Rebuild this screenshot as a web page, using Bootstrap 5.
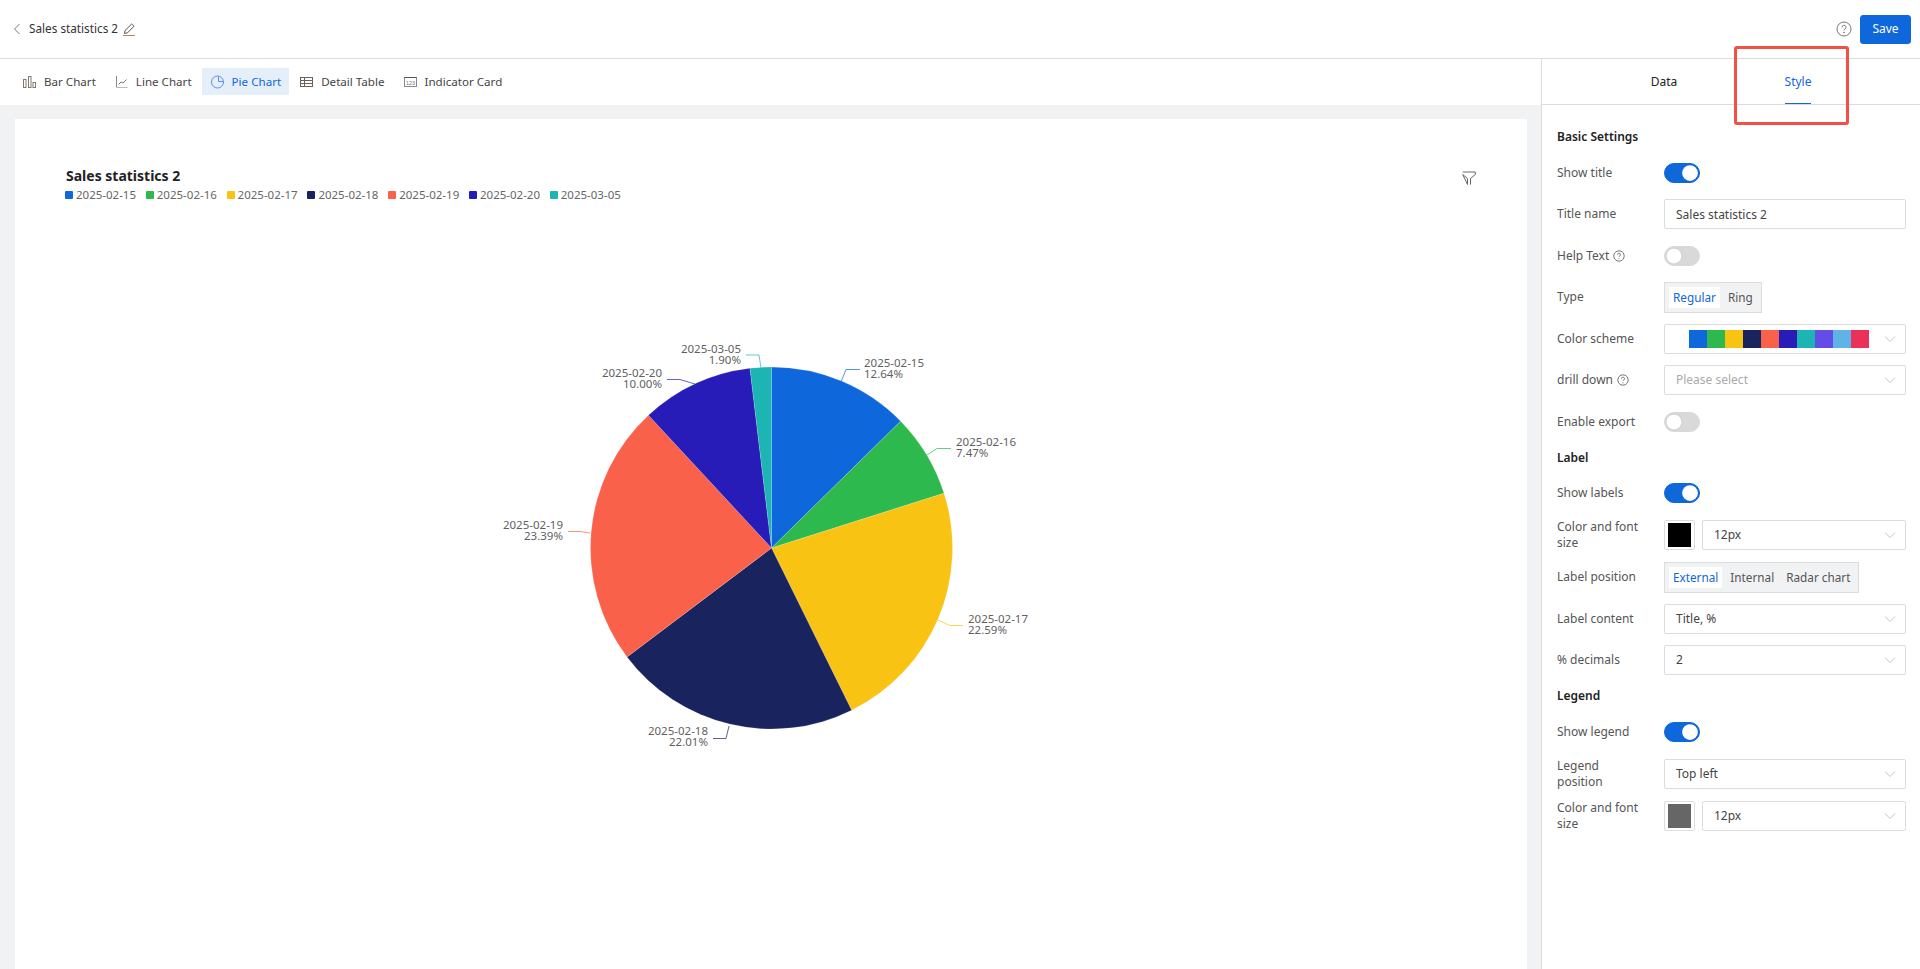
<!DOCTYPE html>
<html lang="en">

<head>
    <meta charset="UTF-8">
    <meta name="viewport" content="width=device-width, initial-scale=1.0">
    <title>Sales statistics 2</title>
    <link href="https://cdn.jsdelivr.net/npm/bootstrap@5.3.0/dist/css/bootstrap.min.css" rel="stylesheet">
    <style>
        body {
            font-family: "Noto Sans", "Liberation Sans", sans-serif;
            font-size: 12px;
            color: #333;
            height: 100vh;
            overflow: hidden;
        }

        .top-bar {
            height: 59px;
            border-bottom: 1px solid #dcdcdc;
            padding: 0 9px 0 13px;
            font-size: 11.75px;
        }

        .save-btn {
            width: 51px;
            height: 29px;
            padding: 0;
            font-size: 12px;
            border-radius: 3px;
            background: #0f67dc;
            border-color: #0f67dc;
        }

        .work-area {
            height: 910px;
        }

        .left-side {
            width: 1541px;
            background: #f1f2f4;
        }

        .chart-tabs {
            height: 46px;
            background: #fff;
            padding: 0 14px 1px;
            gap: 2px;
            font-size: 11.6px;
        }

        .chart-tab {
            height: 27px;
            padding: 0 8px 0 9px;
            gap: 8px;
            color: #444;
        }

        .chart-tab.on {
            background: #e5effa;
            color: #0f67dc;
        }

        .chart-sheet {
            margin: 14px 14px 0 15px;
            height: 850px;
            background: #fff;
            padding-top: 48px;
        }

        .sheet-head {
            padding: 0 51px 0 50px;
        }

        .sheet-title {
            font-size: 14px;
            font-weight: 700;
            line-height: 18px;
            color: #222;
            margin: 0 0 3px 1px;
        }

        .legend-item {
            width: 80.8px;
            gap: 3px;
            color: #666;
            font-size: 11.5px;
            line-height: 14px;
        }

        .legend-dot {
            width: 8px;
            height: 8px;
            border-radius: 1px;
        }

        .filter-icon {
            margin-top: 4px;
        }

        .pie-box {
            display: block;
            width: 1512px;
            height: 759px;
            margin-top: 8px;
        }

        .pie-box text {
            font-family: "Noto Sans", "Liberation Sans", sans-serif;
            font-size: 11.5px;
            fill: #5f5f5f;
        }

        .side-panel {
            width: 379px;
            border-left: 1px solid #dcdcdc;
            background: #fff;
        }

        .side-tabs {
            height: 46px;
            border-bottom: 1px solid #dcdcdc;
        }

        .side-tab {
            width: 134px;
            height: 45px;
            color: #222;
        }

        .side-tab.on {
            color: #0f67dc;
            position: relative;
        }

        .side-tab.on::after {
            content: "";
            position: absolute;
            left: 54px;
            width: 26px;
            bottom: 0;
            height: 1px;
            background: #0f67dc;
        }

        .mark-box {
            position: absolute;
            left: 1734px;
            top: 46px;
            width: 115px;
            height: 79px;
            border: 3px solid #f44f45;
            border-radius: 3px;
        }

        .form-area {
            padding: 24px 14px 0 15px;
        }

        .group-title {
            font-weight: 600;
            color: #222;
            line-height: 16px;
            margin-bottom: 12px;
        }

        .cfg-row {
            min-height: 31px;
            margin-bottom: 10.5px;
        }

        .cfg-row.last-in-group {
            margin-bottom: 12.5px;
        }

        .cfg-label {
            width: 107px;
            padding-right: 21px;
            flex-shrink: 0;
            line-height: 16px;
            color: #555;
        }

        .form-control.cfg-input,
        .form-select.cfg-input {
            height: 30px;
            min-height: 30px;
            padding: 0 28px 0 11px;
            font-size: 12px;
            color: #444;
            border-color: #dcdcdc;
            border-radius: 2px;
            box-shadow: none;
        }

        .form-select.cfg-input {
            background-image: url("data:image/svg+xml,%3csvg xmlns='http://www.w3.org/2000/svg' viewBox='0 0 14 14'%3e%3cpath fill='none' stroke='%23c4c4c4' d='M2 4.5l5 5 5-5'/%3e%3c/svg%3e");
            background-position: right 8px center;
            background-size: 14px 14px;
        }

        .form-select.is-empty {
            color: #aaa;
        }

        .form-select.cfg-input.scheme-bar {
            padding-left: 24px;
        }

        .scheme-chip {
            width: 18px;
            height: 18px;
        }

        .form-switch.cfg-switch {
            padding-left: 0;
            min-height: 20px;
            margin: 0;
        }

        .form-switch.cfg-switch .form-check-input {
            width: 36px;
            height: 20px;
            margin: 0;
            float: none;
            display: block;
            border-color: #d9d9d9;
            background-color: #d9d9d9;
            background-image: url("data:image/svg+xml,%3csvg xmlns='http://www.w3.org/2000/svg' viewBox='-4 -4 8 8'%3e%3ccircle r='3.5' fill='%23fff' stroke='%23bbb' stroke-width='.25'/%3e%3c/svg%3e");
            box-shadow: none;
        }

        .form-switch.cfg-switch .form-check-input:checked {
            border-color: #0f67dc;
            background-color: #0f67dc;
            background-image: url("data:image/svg+xml,%3csvg xmlns='http://www.w3.org/2000/svg' viewBox='-4 -4 8 8'%3e%3ccircle r='3.5' fill='%23fff'/%3e%3c/svg%3e");
        }

        .seg-group {
            background: #f1f2f4;
            border: 1px solid #dcdcdc;
            padding: 4px;
            height: 31px;
            font-size: 11.75px;
        }

        .seg-item {
            padding: 0 4px;
            line-height: 21px;
            color: #555;
            margin-right: 4px;
        }

        .seg-item:last-child {
            margin-right: 0;
        }

        .seg-item.on {
            background: #fff;
            color: #0f67dc;
        }

        .color-pick {
            width: 31px;
            height: 30px;
            border: 1px solid #dcdcdc;
            border-radius: 2px;
            padding: 2px 3px;
            margin-right: 7px;
            flex-shrink: 0;
        }

        .color-fill {
            height: 100%;
        }

        .fill-black {
            background: #000;
        }

        .fill-gray {
            background: #666;
        }
    </style>
</head>

<body>

    <!-- Top bar -->
    <header class="top-bar d-flex align-items-center justify-content-between">
        <div class="d-flex align-items-center">
            <svg width="8" height="12" viewBox="0 0 8 12" class="me-2">
                <path d="M6.500 1 1.500 6l5 5" fill="none" stroke="#777" />
            </svg>
            <span>Sales statistics 2</span>
            <svg width="14" height="14" viewBox="0 0 14 14" class="ms-1">
                <path d="M3 8.500 2.500 11.500l3-.7 6.500-6.500-2.300-2.300z" fill="none" stroke="#555" />
                <path d="M1 13.500h12" stroke="#b5855f" />
            </svg>
        </div>
        <div class="d-flex align-items-center gap-2">
            <svg width="16" height="16" viewBox="0 0 16 16">
                <circle cx="8" cy="8" r="7" fill="none" stroke="#777" />
                <path d="M6 6.300a2 2 0 1 1 3 1.700c-.7.4-1 .8-1 1.500" fill="none" stroke="#777" />
                <circle cx="8" cy="11.600" r=".8" fill="#777" />
            </svg>
            <button type="button" class="btn btn-primary save-btn">Save</button>
        </div>
    </header>

    <div class="work-area d-flex">
        <!-- Chart side -->
        <main class="left-side">
            <div class="chart-tabs d-flex align-items-center">
                <div class="chart-tab d-flex align-items-center">
                    <svg width="13" height="14" viewBox="0 0 13 14" fill="none" stroke="#80786f">
                        <rect x=".5" y="4.500" width="2.500" height="8" />
                        <rect x="5.500" y="1.500" width="2.500" height="11" />
                        <rect x="10" y="7.500" width="2.500" height="5" />
                    </svg>
                    <span>Bar Chart</span>
                </div>
                <div class="chart-tab d-flex align-items-center">
                    <svg width="13" height="14" viewBox="0 0 13 14" fill="none">
                        <path d="M1.500 1v11" stroke="#888" />
                        <path d="M1 12.500h11.500" stroke="#bbb" />
                        <path d="M3.500 9.500l2.500-2.500 2 1 3.500-3.500" stroke="#777" />
                    </svg>
                    <span>Line Chart</span>
                </div>
                <div class="chart-tab on d-flex align-items-center">
                    <svg width="13" height="14" viewBox="0 0 13 14" fill="none" stroke="#6488e6">
                        <circle cx="6.500" cy="7" r="6" />
                        <path d="M7.500 1.500v5h5" />
                    </svg>
                    <span>Pie Chart</span>
                </div>
                <div class="chart-tab d-flex align-items-center">
                    <svg width="13" height="14" viewBox="0 0 13 14" fill="none" stroke="#6a6058">
                        <rect x=".5" y="2.500" width="12" height="9" />
                        <path d="M.5 5.500h12M.5 8.500h12M4.500 2.500v9" />
                    </svg>
                    <span>Detail Table</span>
                </div>
                <div class="chart-tab d-flex align-items-center">
                    <svg width="13" height="14" viewBox="0 0 13 14" fill="none">
                        <rect x=".5" y="2.500" width="12" height="9" stroke="#888" />
                        <path d="M.5 2.500h12" stroke="#555" />
                        <text x="6.500" y="9.500" font-size="5.500" text-anchor="middle" fill="#777" font-family="Liberation Sans">123</text>
                    </svg>
                    <span>Indicator Card</span>
                </div>
            </div>

            <div class="chart-sheet">
                <div class="sheet-head d-flex justify-content-between">
                    <div>
                        <div class="sheet-title">Sales statistics 2</div>
                        <div class="d-flex" id="chart-legend"></div>
                    </div>
                    <svg class="filter-icon" width="14" height="14" viewBox="0 0 14 14" fill="none" stroke="#666">
                        <path d="M.7 1h12.600v2.500L8.500 7.500v6M5.500 13.500v-6L.7 3.500z" />
                    </svg>
                </div>
                <svg class="pie-box" id="pie-chart" viewBox="15 210 1512 759"></svg>
            </div>
        </main>

        <!-- Settings side -->
        <aside class="side-panel">
            <div class="side-tabs d-flex justify-content-center">
                <div class="side-tab d-flex align-items-center justify-content-center">Data</div>
                <div class="side-tab on d-flex align-items-center justify-content-center">Style</div>
            </div>

            <div class="form-area">
                <div class="group-title">Basic Settings</div>

                <div class="cfg-row d-flex align-items-center">
                    <div class="cfg-label">Show title</div>
                    <div class="form-check form-switch cfg-switch"><input class="form-check-input" type="checkbox" role="switch" checked></div>
                </div>
                <div class="cfg-row d-flex align-items-center">
                    <div class="cfg-label">Title name</div>
                    <input type="text" class="form-control cfg-input" value="Sales statistics 2">
                </div>
                <div class="cfg-row d-flex align-items-center">
                    <div class="cfg-label d-flex align-items-center gap-1">Help Text
                        <svg width="12" height="12" viewBox="0 0 12 12" fill="none" stroke="#777">
                            <circle cx="6" cy="6" r="5.200" />
                            <path d="M4.500 4.700a1.500 1.500 0 1 1 2.200 1.300c-.5.300-.7.500-.7 1" />
                            <path d="M6 8.300v1" />
                        </svg>
                    </div>
                    <div class="form-check form-switch cfg-switch"><input class="form-check-input" type="checkbox" role="switch"></div>
                </div>
                <div class="cfg-row d-flex align-items-center">
                    <div class="cfg-label">Type</div>
                    <div class="seg-group d-flex">
                        <div class="seg-item on">Regular</div>
                        <div class="seg-item">Ring</div>
                    </div>
                </div>
                <div class="cfg-row d-flex align-items-center">
                    <div class="cfg-label">Color scheme</div>
                    <div class="form-select cfg-input scheme-bar d-flex align-items-center" id="scheme-bar"></div>
                </div>
                <div class="cfg-row d-flex align-items-center">
                    <div class="cfg-label d-flex align-items-center gap-1">drill down
                        <svg width="12" height="12" viewBox="0 0 12 12" fill="none" stroke="#777">
                            <circle cx="6" cy="6" r="5.200" />
                            <path d="M4.500 4.700a1.500 1.500 0 1 1 2.200 1.300c-.5.300-.7.500-.7 1" />
                            <path d="M6 8.300v1" />
                        </svg>
                    </div>
                    <select class="form-select cfg-input is-empty"><option>Please select</option></select>
                </div>
                <div class="cfg-row last-in-group d-flex align-items-center">
                    <div class="cfg-label">Enable export</div>
                    <div class="form-check form-switch cfg-switch"><input class="form-check-input" type="checkbox" role="switch"></div>
                </div>

                <div class="group-title">Label</div>

                <div class="cfg-row d-flex align-items-center">
                    <div class="cfg-label">Show labels</div>
                    <div class="form-check form-switch cfg-switch"><input class="form-check-input" type="checkbox" role="switch" checked></div>
                </div>
                <div class="cfg-row d-flex align-items-center">
                    <div class="cfg-label">Color and font size</div>
                    <div class="color-pick"><div class="color-fill fill-black"></div></div>
                    <select class="form-select cfg-input"><option>12px</option></select>
                </div>
                <div class="cfg-row d-flex align-items-center">
                    <div class="cfg-label">Label position</div>
                    <div class="seg-group d-flex">
                        <div class="seg-item on">External</div>
                        <div class="seg-item">Internal</div>
                        <div class="seg-item">Radar chart</div>
                    </div>
                </div>
                <div class="cfg-row d-flex align-items-center">
                    <div class="cfg-label">Label content</div>
                    <select class="form-select cfg-input"><option>Title, %</option></select>
                </div>
                <div class="cfg-row last-in-group d-flex align-items-center">
                    <div class="cfg-label">% decimals</div>
                    <select class="form-select cfg-input"><option>2</option></select>
                </div>

                <div class="group-title">Legend</div>

                <div class="cfg-row d-flex align-items-center">
                    <div class="cfg-label">Show legend</div>
                    <div class="form-check form-switch cfg-switch"><input class="form-check-input" type="checkbox" role="switch" checked></div>
                </div>
                <div class="cfg-row d-flex align-items-center">
                    <div class="cfg-label">Legend position</div>
                    <select class="form-select cfg-input"><option>Top left</option></select>
                </div>
                <div class="cfg-row d-flex align-items-center">
                    <div class="cfg-label">Color and font size</div>
                    <div class="color-pick"><div class="color-fill fill-gray"></div></div>
                    <select class="form-select cfg-input"><option>12px</option></select>
                </div>
            </div>
        </aside>
    </div>

    <!-- Red annotation round the Style tab -->
    <div class="mark-box"></div>

    <script src="https://cdn.jsdelivr.net/npm/bootstrap@5.3.0/dist/js/bootstrap.bundle.min.js"></script>
    <script>
        const scheme = ['#0f67dc', '#2eb94f', '#f9c314', '#19245f', '#f9614a', '#281cb8', '#1db5b3', '#644ce8', '#5fb3e6', '#ec3158'];

        // anchor, text x, first line y, leader points (page coordinates)
        const slices = [
            { name: '2025-02-15', pct: 12.64, color: scheme[0], anchor: 'start', x: 864, y: 367, line: '860,369.5 846,369.5 841,382' },
            { name: '2025-02-16', pct: 7.47, color: scheme[1], anchor: 'start', x: 956, y: 446, line: '951,448.5 937,448.5 927,455' },
            { name: '2025-02-17', pct: 22.59, color: scheme[2], anchor: 'start', x: 968, y: 623, line: '963,625.5 950,625.5 938,620' },
            { name: '2025-02-18', pct: 22.01, color: scheme[3], anchor: 'end', x: 708, y: 735, line: '713,738.5 726,738.5 729,726' },
            { name: '2025-02-19', pct: 23.39, color: scheme[4], anchor: 'end', x: 563, y: 529, line: '568,531.5 580,531.5 590,533' },
            { name: '2025-02-20', pct: 10.00, color: scheme[5], anchor: 'end', x: 662, y: 377, line: '667,379.5 680,379.5 695,384' },
            { name: '2025-03-05', pct: 1.90, color: scheme[6], anchor: 'end', x: 741, y: 353, line: '746,355 759,355 761,368' }
        ];

        const cx = 771.5, cy = 548, r = 181;
        const total = slices.reduce((sum, s) => sum + s.pct, 0);
        let svg = '';
        let start = 0;
        const point = (a) => `${(cx + r * Math.sin(a)).toFixed(2)} ${(cy - r * Math.cos(a)).toFixed(2)}`;

        slices.forEach(s => {
            const end = start + s.pct / total * Math.PI * 2;
            const big = end - start > Math.PI ? 1 : 0;
            svg += `<path d="M${cx} ${cy}L${point(start)}A${r} ${r} 0 ${big} 1 ${point(end)}Z" fill="${s.color}" stroke="#fff" stroke-opacity=".3" stroke-width=".5"/>`;
            svg += `<polyline points="${s.line}" fill="none" stroke="${s.color}" stroke-opacity=".7"/>`;
            svg += `<text x="${s.x}" y="${s.y}" text-anchor="${s.anchor}">${s.name}</text>`;
            svg += `<text x="${s.x}" y="${s.y + 11}" text-anchor="${s.anchor}">${s.pct.toFixed(2)}%</text>`;
            start = end;
        });
        document.getElementById('pie-chart').innerHTML = svg;

        document.getElementById('chart-legend').innerHTML = slices.map(s => `
            <div class="legend-item d-flex align-items-center">
                <span class="legend-dot" style="background:${s.color}"></span><span>${s.name}</span>
            </div>`).join('');

        document.getElementById('scheme-bar').innerHTML = scheme.map(c =>
            `<span class="scheme-chip" style="background:${c}"></span>`).join('');
    </script>
</body>

</html>
